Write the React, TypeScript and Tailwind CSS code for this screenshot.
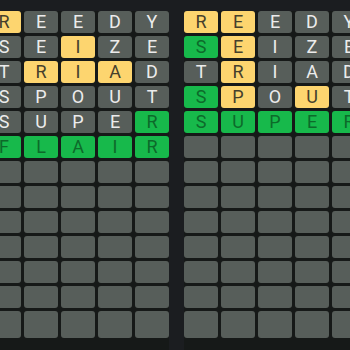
import React from "react";

type C = "y" | "g" | "n" | "e";

const left: [string, string][] = [
  ["REEDY", "ynnnn"],
  ["SEIZE", "nnynn"],
  ["TRIAD", "nyyyn"],
  ["SPOUT", "nnnnn"],
  ["SUPER", "nnnng"],
  ["FLAIR", "ggggg"],
];
const right: [string, string][] = [
  ["REEDY", "yynnn"],
  ["SEIZE", "gynnn"],
  ["TRIAD", "nynnn"],
  ["SPOUT", "gynyn"],
  ["SUPER", "ggggg"],
];

function Tile({ ch, c, last }: { ch: string; c: C; last: boolean }) {
  const cls =
    c === "y"
      ? "bg-[#fdd56f] text-[#45402c]"
      : c === "g"
      ? "bg-[#17b94b] text-[#0d6a2a]"
      : "bg-[#575e5a] text-[#ececec]";
  return (
    <div
      className={`${cls} ${last ? "h-[27px]" : "h-[22px]"} w-[34px] rounded-[3px] flex items-center justify-center text-[18px] leading-none`}
      style={{ fontFamily: "Roboto, 'Noto Sans', sans-serif" }}
    >
      {ch}
    </div>
  );
}

function Board({ rows, className }: { rows: [string, string][]; className: string }) {
  const all: [string, string][] = [...rows];
  while (all.length < 13) all.push(["     ", "eeeee"]);
  return (
    <div className={`flex flex-col gap-[3px] shrink-0 ${className}`}>
      {all.map(([w, cs], i) => (
        <div key={i} className="flex gap-[3px]">
          {w.split("").map((ch, j) => (
            <Tile key={j} ch={ch.trim()} c={cs[j] as C} last={i === 12} />
          ))}
        </div>
      ))}
    </div>
  );
}

export default function App() {
  return (
    <div className="w-[350px] h-[350px] bg-[#1b1d20] overflow-hidden flex pt-[11px]">
      <Board rows={left} className="ml-[-13px] bg-[#161918]" />
      <Board rows={right} className="ml-[15px] bg-[#161918]" />
    </div>
  );
}
